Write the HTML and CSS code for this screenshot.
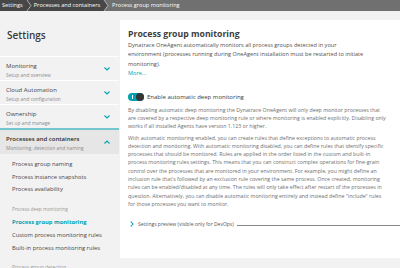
FILE: index.html
```html
<!DOCTYPE html>
<html lang='en'>
<head>
	<meta charset='UTF-8'>
	<title>Process group monitoring</title>
	<link rel="stylesheet" href="styles.css">
</head>
<body>
	<div class='crumbs'>
		<span class='crumb'>Settings</span>
		<svg class='crumb-sep' width='8' height='11' viewBox='0 0 8 11'><polyline points='3,0 7,5.5 3,11' fill='none' stroke='#c8c8c8' stroke-width='0.8'/></svg>
		<span class='crumb'>Processes and containers</span>
		<svg class='crumb-sep' width='8' height='11' viewBox='0 0 8 11'><rect width='8' height='11' fill='#707070'/><polygon points='0,0 3,0 7,5.5 3,11 0,11' fill='#474747'/><polyline points='3,0 7,5.5 3,11' fill='none' stroke='#c8c8c8' stroke-width='0.8'/></svg>
		<span class='crumb crumb-last'>Process group monitoring</span>
	</div>

	<div class='page'>
		<div class='sidebar'>
			<div class='side-title'>Settings</div>

			<div class='side-group'>
				<div class='group-text'>
					<div class='group-name'>Monitoring</div>
					<div class='group-sub'>Setup and overview</div>
				</div>
				<svg class='chev' width='6' height='4' viewBox='0 0 6 4'><polyline points='0.5,0.5 3,3 5.5,0.5' fill='none' stroke='#00a1b2' stroke-width='1.1'/></svg>
			</div>
			<div class='side-group'>
				<div class='group-text'>
					<div class='group-name'>Cloud Automation</div>
					<div class='group-sub'>Setup and configuration</div>
				</div>
				<svg class='chev' width='6' height='4' viewBox='0 0 6 4'><polyline points='0.5,0.5 3,3 5.5,0.5' fill='none' stroke='#00a1b2' stroke-width='1.1'/></svg>
			</div>
			<div class='side-group'>
				<div class='group-text'>
					<div class='group-name'>Ownership</div>
					<div class='group-sub'>Set up and manage</div>
				</div>
				<svg class='chev' width='6' height='4' viewBox='0 0 6 4'><polyline points='0.5,0.5 3,3 5.5,0.5' fill='none' stroke='#00a1b2' stroke-width='1.1'/></svg>
			</div>
			<div class='side-group open'>
				<div class='group-text'>
					<div class='group-name'>Processes and containers</div>
					<div class='group-sub'>Monitoring, detection and naming</div>
				</div>
				<svg class='chev' width='6' height='4' viewBox='0 0 6 4'><polyline points='0.5,3.5 3,1 5.5,3.5' fill='none' stroke='#00a1b2' stroke-width='1.1'/></svg>
			</div>

			<div class='side-list'>
				<div class='side-item'>Process group naming</div>
				<div class='side-item'>Process instance snapshots</div>
				<div class='side-item'>Process availability</div>
				<div class='side-label'>Process deep monitoring</div>
				<div class='side-item active'>Process group monitoring</div>
				<div class='side-item'>Custom process monitoring rules</div>
				<div class='side-item'>Built-in process monitoring rules</div>
				<div class='side-label'>Process group detection</div>
			</div>
		</div>

		<div class='main'>
			<div class='panel'>
				<div class='panel-title'>Process group monitoring</div>
				<p class='intro'>Dynatrace OneAgent automatically monitors all process groups detected in your<br>environment (processes running during OneAgent installation must be restarted to initiate<br>monitoring).<br><a class='more'>More...</a></p>

				<div class='toggle-row'>
					<span class='toggle'><span class='toggle-mark'></span><span class='toggle-knob'></span></span>
					<span class='toggle-label'>Enable automatic deep monitoring</span>
				</div>

				<p class='note'>By disabling automatic deep monitoring the Dynatrace OneAgent will only deep monitor processes that<br>are covered by a respective deep monitoring rule or where monitoring is enabled explicitly. Disabling only<br>works if all installed Agents have version 1.123 or higher.</p>
				<p class='note'>With automatic monitoring enabled, you can create rules that define exceptions to automatic process<br>detection and monitoring. With automatic monitoring disabled, you can define rules that identify specific<br>processes that should be monitored. Rules are applied in the order listed in the custom and built-in<br>process monitoring rules settings. This means that you can construct complex operations for fine-grain<br>control over the processes that are monitored in your environment. For example, you might define an<br>inclusion rule that's followed by an exclusion rule covering the same process. Once created, monitoring<br>rules can be enabled/disabled at any time. The rules will only take effect after restart of the processes in<br>question. Alternatively, you can disable automatic monitoring entirely and instead define "include" rules<br>for those processes you want to monitor.</p>

				<div class='preview'>
					<svg class='preview-chev' width='4' height='6' viewBox='0 0 4 6'><polyline points='0.7,0.5 3,3 0.7,5.5' fill='none' stroke='#00a1b2' stroke-width='1.1'/></svg>
					<span class='preview-text'>Settings preview (visible only for DevOps)</span>
					<span class='preview-line'></span>
				</div>
			</div>
		</div>
	</div>
</body>
</html>
```

FILE: styles.css
```css
html, body{
	margin:0;
	width:100%;
	height:100%;
	overflow:hidden;
	font-family: "Open Sans", "Noto Sans", sans-serif;
	background-color:#f2f2f2;
	color:#454646;
}
.crumbs{
	display:flex;
	align-items:center;
	height:11px;
	background-color:#474747;
}
.crumb{
	font-size:5.6px;
	line-height:11px;
	color:#ffffff;
	padding:0 1px 0 2px;
	white-space:nowrap;
}
.crumb-sep{
	flex:none;
}
.crumb-last{
	flex:1 1 auto;
	align-self:stretch;
	background-color:#707070;
	padding-left:3px;
}
.page{
	display:flex;
	align-items:flex-start;
}
.sidebar{
	width:119px;
	flex:none;
}
.side-title{
	font-size:10px;
	font-weight:600;
	line-height:14px;
	padding:17px 7px 14px;
	color:#3a3a3a;
}
.side-group{
	display:flex;
	align-items:center;
	height:20px;
	padding:3px 9px 0 6px;
	border-top:1px solid #ffffff;
}
.group-text{
	flex:1 1 auto;
}
.group-name{
	font-size:6px;
	line-height:9px;
	color:#454646;
}
.group-sub{
	font-size:4.9px;
	line-height:8px;
	color:#8c8c8c;
}
.chev{
	flex:none;
	margin-bottom:3px;
}
.side-group.open{
	height:21px;
	border-top:2px solid #74c6ce;
	background-color:#e6e6e6;
}
.side-group.open .group-name{
	font-weight:600;
	color:#2e2e2e;
}
.side-list{
	padding:4px 0 0 12px;
}
.side-item{
	font-size:5.8px;
	line-height:12.7px;
	color:#454646;
	white-space:nowrap;
}
.side-item.active{
	font-weight:700;
	color:#00a1b2;
}
.side-label{
	font-size:4.8px;
	line-height:8px;
	color:#999999;
	margin:9px 0 3px;
}
.main{
	flex:1 1 auto;
	padding:9px 0 0 1px;
}
.panel{
	background-color:#ffffff;
	padding:8px 0 30px 8px;
	white-space:nowrap;
}
.panel-title{
	font-size:8.7px;
	font-weight:700;
	line-height:12px;
	color:#3e3e3e;
}
.intro{
	margin:1px 0 0;
	font-size:5.6px;
	line-height:9.4px;
	color:#505050;
}
.more{
	color:#00a1b2;
}
.toggle-row{
	display:flex;
	align-items:center;
	height:10px;
	margin-top:13px;
}
.toggle{
	position:relative;
	width:16px;
	height:8px;
	border-radius:4px;
	background-color:#00a1b2;
	margin-right:3px;
}
.toggle-mark{
	position:absolute;
	left:4px;
	top:2px;
	width:1px;
	height:4px;
	background-color:#ffffff;
}
.toggle-knob{
	position:absolute;
	right:0;
	top:0;
	width:8px;
	height:8px;
	border-radius:50%;
	background-color:#353535;
}
.toggle-label{
	font-size:6px;
	color:#3a3a3a;
}
.note{
	margin:4px 0 0;
	font-size:5.25px;
	line-height:8.3px;
	color:#6e6e6e;
}
.note + .note{
	margin-top:3px;
}
.preview{
	display:flex;
	align-items:center;
	margin-top:12px;
	height:8px;
}
.preview-chev{
	margin:0 4px 0 2px;
}
.preview-text{
	font-size:5px;
	color:#555555;
}
.preview-line{
	flex:1 1 auto;
	height:1px;
	margin:3px 0 0 3px;
	background-color:#8a8a8a;
}
```
